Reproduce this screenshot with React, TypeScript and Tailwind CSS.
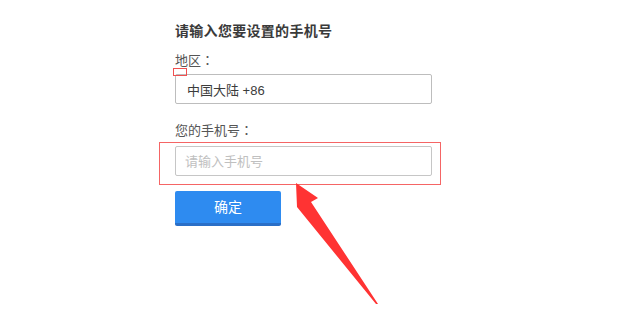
const Arrow = () => (
  <svg
    className="pointer-events-none absolute left-0 top-0"
    width="620"
    height="309"
    viewBox="0 0 620 309"
  >
    <polygon
      points="296,183 318,198 311,202 378,304 376,304 297,207"
      fill="#ff3333"
    />
  </svg>
);

// full-width colon, centred the way the original font draws it
const Colon = () => (
  <span style={{ fontFamily: '"Noto Sans CJK JP", sans-serif' }}>：</span>
);

const App = () => {
  return (
    <div
      className="relative h-[309px] w-[620px] overflow-hidden bg-white"
      style={{ fontFamily: '"Liberation Sans", "Noto Sans CJK SC", sans-serif' }}
    >
      {/* Form */}
      <div className="flex w-[432px] flex-col pl-[175px] pt-[21px]">
        <h2 className="text-[14px] font-bold leading-[20px] tracking-[0.3px] text-[#3a3a3a]">
          请输入您要设置的手机号
        </h2>

        <label className="mt-[10px] h-[18px] text-[13px] leading-[18px] text-[#555]">
          地区<Colon />
        </label>
        <input
          readOnly
          value="中国大陆 +86"
          className="mt-[5px] h-[30px] w-[257px] rounded-[2px] border border-[#bdbdbd] bg-white pl-[11px] text-[13px] text-[#3c3c3c] outline-none"
        />

        <label className="mt-[17px] h-[18px] text-[13px] leading-[18px] text-[#555]">
          您的手机号<Colon />
        </label>
        <input
          placeholder="请输入手机号"
          className="mt-[7px] h-[30px] w-[257px] rounded-[2px] border border-[#c6c6c6] bg-white pl-[9px] text-[13px] text-[#333] outline-none placeholder:text-[#c0c0c0]"
        />

        <button className="mt-[15px] h-[35px] w-[106px] rounded-[2px] border-b-[3px] border-[#2a6fc7] bg-[#2e8bf0] text-[14px] text-white">
          确定
        </button>
      </div>

      {/* Annotations */}
      <div className="absolute left-[173px] top-[68px] h-[8px] w-[14px] border border-[#f05050]" />
      <div className="absolute left-[159px] top-[142px] h-[43px] w-[282px] border-[1.5px] border-[#f56565]" />
      <Arrow />
    </div>
  );
};

export default App;
